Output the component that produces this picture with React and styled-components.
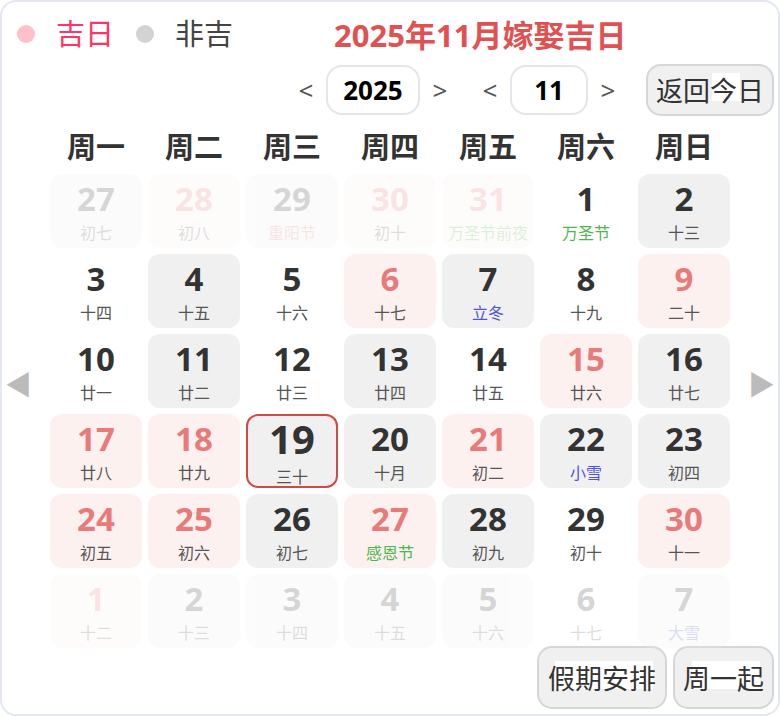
import React from 'react';
import styled, { createGlobalStyle } from 'styled-components';

const GlobalStyle = createGlobalStyle`
  html, body {
    margin: 0;
    padding: 0;
    background: #ffffff;
  }
  body {
    font-family: "Noto Sans", "Noto Sans CJK SC", sans-serif;
  }
`

const Frame = styled.div`
  width: 780px;
  height: 716px;
  box-sizing: border-box;
  border: 2px solid #e4e7f4;
  border-radius: 16px;
  background: #fff;
  display: flex;
  flex-direction: column;
  overflow: hidden;
`

const Header = styled.div`
  display: flex;
  align-items: center;
  height: 40px;
  margin-top: 12px;
  padding-left: 15px;
`

const Dot = styled.span`
  width: 18px;
  height: 18px;
  border-radius: 50%;
  background: ${props => props.color};
  margin-right: 21px;
`

const LegendText = styled.span`
  font-size: 29px;
  color: ${props => props.color};
  margin-right: 22px;
  line-height: 40px;
`

const Title = styled.h1`
  margin: 2px 0 0 79px;
  font-size: 31px;
  font-weight: 700;
  color: #e05252;
  line-height: 40px;
`

const NavRow = styled.div`
  display: flex;
  align-items: center;
  justify-content: flex-end;
  height: 52px;
  margin-top: 10px;
  padding-right: 4px;
`

const Arrow = styled.span`
  width: 40px;
  text-align: center;
  font-size: 26px;
  color: #555;
  margin-left: ${props => props.ml || 0}px;
`

const NumBox = styled.div`
  width: ${props => props.w}px;
  height: 50px;
  box-sizing: border-box;
  border: 2px solid #e4e4ea;
  border-radius: 16px;
  display: flex;
  align-items: center;
  justify-content: center;
  font-size: 26px;
  font-weight: 700;
  color: #000;
`

const GreyButton = styled.button`
  width: ${props => props.w}px;
  height: ${props => props.h}px;
  margin-left: ${props => props.ml || 0}px;
  box-sizing: border-box;
  border: 2px solid #d6d6d6;
  border-radius: 15px;
  background: #f0f0f0;
  padding: 0;
  font-family: "Noto Sans CJK SC", sans-serif;
  font-size: 27px;
  color: #333;
  display: flex;
  align-items: center;
  justify-content: center;
  cursor: pointer;
`

const ButtonLabel = styled.span`
  line-height: 34px;
  background: linear-gradient(#fff, #fff) no-repeat;
  background-position: ${props => props.bx}px 0;
  background-size: ${props => props.bw}px 28px;
`

const Body = styled.div`
  display: flex;
  flex-direction: column;
`

const WeekRow = styled.div`
  display: grid;
  grid-template-columns: repeat(7, 92px);
  column-gap: 6px;
  margin: 9px 0 0 48px;
  height: 40px;
  align-items: center;
`

const WeekName = styled.div`
  text-align: center;
  font-family: "Noto Sans CJK SC", sans-serif;
  font-size: 29px;
  line-height: 40px;
  font-weight: 700;
  color: #333;
`

const GridRow = styled.div`
  display: flex;
  align-items: stretch;
  margin-top: 9px;
`

const Side = styled.div`
  width: 48px;
  display: flex;
  align-items: flex-start;
  justify-content: ${props => props.right ? 'flex-end' : 'flex-start'};
  padding: ${props => props.right ? '193px 3px 0 0' : '193px 0 0 3px'};
  box-sizing: border-box;
  font-size: 27px;
  line-height: 36px;
  color: #bbb;
`

const Grid = styled.div`
  display: grid;
  grid-template-columns: repeat(7, 92px);
  grid-auto-rows: 74px;
  gap: 6px;
`

const bgFor = { red: '#fdf1f0', grey: '#f0f0f0', none: 'transparent' };

const Cell = styled.div`
  box-sizing: border-box;
  border-radius: 12px;
  background: ${props => bgFor[props.kind]};
  border: ${props => props.today ? '2px solid #d04848' : 'none'};
  opacity: ${props => props.faded ? 0.2 : 1};
  display: flex;
  flex-direction: column;
  align-items: center;
  justify-content: center;
`

const DayNum = styled.div`
  font-size: ${props => props.today ? 40 : 33}px;
  font-weight: 700;
  line-height: ${props => props.today ? 42 : 38}px;
  color: ${props => props.kind === 'red' ? '#e87a7a' : '#333'};
`

const subColors = { green: '#4cb84c', blue: '#5252e0', red: '#e87a7a' };

const Lunar = styled.div`
  margin-top: ${props => props.today ? 7 : 4}px;
  font-family: "Noto Sans CJK SC", sans-serif;
  font-size: 16px;
  line-height: ${props => props.today ? 18 : 20}px;
  white-space: nowrap;
  color: ${props => subColors[props.tone] || '#555'};
`

const Footer = styled.div`
  display: flex;
  justify-content: flex-end;
  padding-right: 4px;
  margin-top: -2px;
`

const days = [
  [27, '初七', 'grey', 1], [28, '初八', 'red', 1], [29, '重阳节', 'grey', 1, 'red'], [30, '初十', 'red', 1], [31, '万圣节前夜', 'red', 1, 'green'], [1, '万圣节', 'none', 0, 'green'], [2, '十三', 'grey'],
  [3, '十四', 'none'], [4, '十五', 'grey'], [5, '十六', 'none'], [6, '十七', 'red'], [7, '立冬', 'grey', 0, 'blue'], [8, '十九', 'none'], [9, '二十', 'red'],
  [10, '廿一', 'none'], [11, '廿二', 'grey'], [12, '廿三', 'none'], [13, '廿四', 'grey'], [14, '廿五', 'none'], [15, '廿六', 'red'], [16, '廿七', 'grey'],
  [17, '廿八', 'red'], [18, '廿九', 'red'], [19, '三十', 'grey', 0, null, true], [20, '十月', 'grey'], [21, '初二', 'red'], [22, '小雪', 'grey', 0, 'blue'], [23, '初四', 'grey'],
  [24, '初五', 'red'], [25, '初六', 'red'], [26, '初七', 'grey'], [27, '感恩节', 'red', 0, 'green'], [28, '初九', 'grey'], [29, '初十', 'none'], [30, '十一', 'red'],
  [1, '十二', 'red', 1], [2, '十三', 'grey', 1], [3, '十四', 'grey', 1], [4, '十五', 'grey', 1], [5, '十六', 'grey', 1], [6, '十七', 'none', 1], [7, '大雪', 'grey', 1, 'blue'],
];

const weekNames = ['周一', '周二', '周三', '周四', '周五', '周六', '周日'];

export default function App() {
  return (
    <>
      <GlobalStyle />
      <Frame>
        <Header>
          <Dot color="#ffc0cb" />
          <LegendText color="#ff3366">吉日</LegendText>
          <Dot color="#d3d3d3" />
          <LegendText color="#444">非吉</LegendText>
          <Title>2025年11月嫁娶吉日</Title>
        </Header>
        <NavRow>
          <Arrow>&lt;</Arrow>
          <NumBox w={94}>2025</NumBox>
          <Arrow>&gt;</Arrow>
          <Arrow ml={10}>&lt;</Arrow>
          <NumBox w={78}>11</NumBox>
          <Arrow>&gt;</Arrow>
          <GreyButton w={128} h={52} ml={18}>
            <ButtonLabel bx={56} bw={28}>返回今日</ButtonLabel>
          </GreyButton>
        </NavRow>
        <Body>
          <WeekRow>
            {weekNames.map(n => <WeekName key={n}>{n}</WeekName>)}
          </WeekRow>
          <GridRow>
            <Side>◀</Side>
            <Grid>
              {days.map(([num, sub, kind, faded, tone, today], i) => (
                <Cell key={i} kind={kind} faded={faded} today={today}>
                  <DayNum kind={kind} today={today}>{num}</DayNum>
                  <Lunar tone={tone} today={today}>{sub}</Lunar>
                </Cell>
              ))}
            </Grid>
            <Side right>▶</Side>
          </GridRow>
        </Body>
        <Footer>
          <GreyButton w={130} h={63}>
            <ButtonLabel bx={7} bw={98}>假期安排</ButtonLabel>
          </GreyButton>
          <GreyButton w={101} h={63} ml={6}>
            <ButtonLabel bx={9} bw={68}>周一起</ButtonLabel>
          </GreyButton>
        </Footer>
      </Frame>
    </>
  );
}
